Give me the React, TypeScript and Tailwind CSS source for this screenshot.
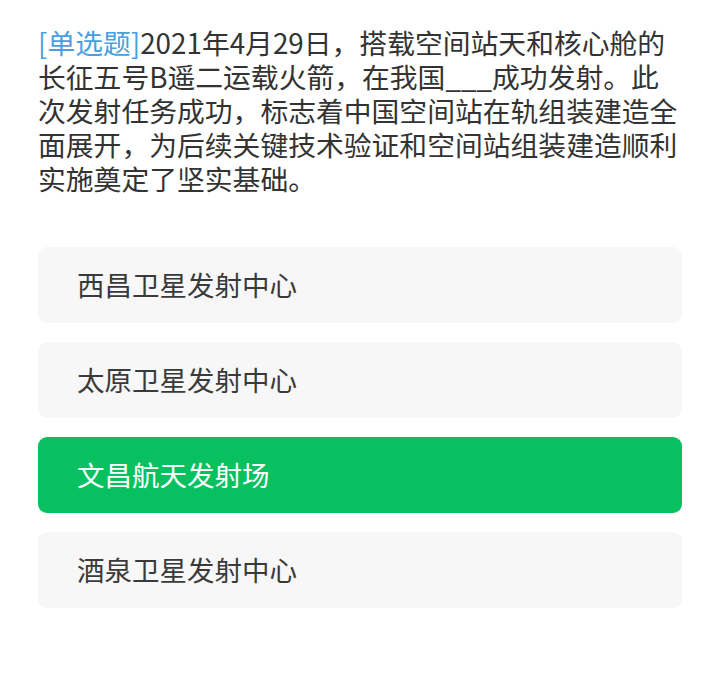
import React from "react";

const options = [
  { text: "西昌卫星发射中心", selected: false },
  { text: "太原卫星发射中心", selected: false },
  { text: "文昌航天发射场", selected: true },
  { text: "酒泉卫星发射中心", selected: false },
];

const lines = [
  "长征五号B遥二运载火箭，在我国___成功发射。此",
  "次发射任务成功，标志着中国空间站在轨组装建造全",
  "面展开，为后续关键技术验证和空间站组装建造顺利",
  "实施奠定了坚实基础。",
];

export default function App() {
  return (
    <div
      className="w-[720px] h-[680px] bg-white px-[38px] pt-[25px]"
      style={{ fontFamily: '"Noto Sans CJK SC", "Noto Sans", sans-serif' }}
    >
      <div className="text-[27.8px] leading-[34px] text-[#333333]">
        <div className="whitespace-nowrap">
          <span className="text-[#4a9fe0]">[单选题]</span>
          2021年4月29日，搭载空间站天和核心舱的
        </div>
        {lines.map((l) => (
          <div key={l} className="whitespace-nowrap">
            {l}
          </div>
        ))}
      </div>
      <div className="mt-[52px] flex flex-col gap-[19px]">
        {options.map((o) => (
          <div
            key={o.text}
            className={
              o.selected
                ? "h-[76px] rounded-[9px] bg-[#07c160] text-white flex items-center pl-[39px] text-[27.5px]"
                : "h-[76px] rounded-[9px] bg-[#f7f7f7] text-[#3a3a3a] flex items-center pl-[39px] text-[27.5px]"
            }
          >
            {o.text}
          </div>
        ))}
      </div>
    </div>
  );
}
